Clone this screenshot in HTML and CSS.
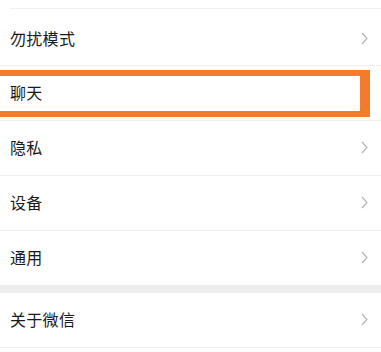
FILE: index.html
```html
<!DOCTYPE html>
<html lang="zh-CN">
<head>
<meta charset="utf-8">
<title>设置</title>
<link rel="stylesheet" href="styles.css">
</head>
<body>
<div class="page">
  <div class="top-line"></div>
  <div class="group">
    <div class="row first"><span class="label">勿扰模式</span><svg class="chev" viewBox="0 0 7 13" width="7" height="13"><path d="M1 1 L6 6.5 L1 12" fill="none" stroke="#b4b4b4" stroke-width="1.2"/></svg></div>
    <div class="row"><span class="label">聊天</span><svg class="chev" viewBox="0 0 7 13" width="7" height="13"><path d="M1 1 L6 6.5 L1 12" fill="none" stroke="#b4b4b4" stroke-width="1.2"/></svg></div>
    <div class="row"><span class="label">隐私</span><svg class="chev" viewBox="0 0 7 13" width="7" height="13"><path d="M1 1 L6 6.5 L1 12" fill="none" stroke="#b4b4b4" stroke-width="1.2"/></svg></div>
    <div class="row"><span class="label">设备</span><svg class="chev" viewBox="0 0 7 13" width="7" height="13"><path d="M1 1 L6 6.5 L1 12" fill="none" stroke="#b4b4b4" stroke-width="1.2"/></svg></div>
    <div class="row last"><span class="label">通用</span><svg class="chev" viewBox="0 0 7 13" width="7" height="13"><path d="M1 1 L6 6.5 L1 12" fill="none" stroke="#b4b4b4" stroke-width="1.2"/></svg></div>
  </div>
  <div class="gap"></div>
  <div class="group">
    <div class="row"><span class="label">关于微信</span><svg class="chev" viewBox="0 0 7 13" width="7" height="13"><path d="M1 1 L6 6.5 L1 12" fill="none" stroke="#b4b4b4" stroke-width="1.2"/></svg></div>
  </div>
  <div class="highlight"></div>
</div>
</body>
</html>
```

FILE: styles.css
```css
html, body {
  margin: 0;
  padding: 0;
  background: #ffffff;
}
body {
  font-family: "Noto Sans CJK SC", "Noto Sans", sans-serif;
  color: #1a1a1a;
  overflow: hidden;
}
.page {
  position: relative;
  width: 381px;
  height: 352px;
  overflow: hidden;
}
.top-line {
  height: 8px;
  margin-left: 10px;
  border-bottom: 1px solid #f1f1f1;
}
.group {
  display: flex;
  flex-direction: column;
}
.row {
  box-sizing: border-box;
  height: 55px;
  display: flex;
  align-items: center;
  justify-content: space-between;
  padding: 0 13px 2px 10px;
  border-bottom: 1px solid #f0f0f0;
}
.row.first {
  height: 57px;
  padding-top: 4px;
}
.row.last {
  height: 54px;
  border-bottom: none;
}
.label {
  font-size: 16px;
  line-height: 20px;
  letter-spacing: 0.3px;
}
.chev {
  display: block;
}
.gap {
  height: 8px;
  background: #ededed;
}
.highlight {
  position: absolute;
  left: -10px;
  top: 70px;
  width: 364px;
  height: 35px;
  border-style: solid;
  border-color: #f47b2e;
  border-width: 6px 10px 6px 6px;
}
```
